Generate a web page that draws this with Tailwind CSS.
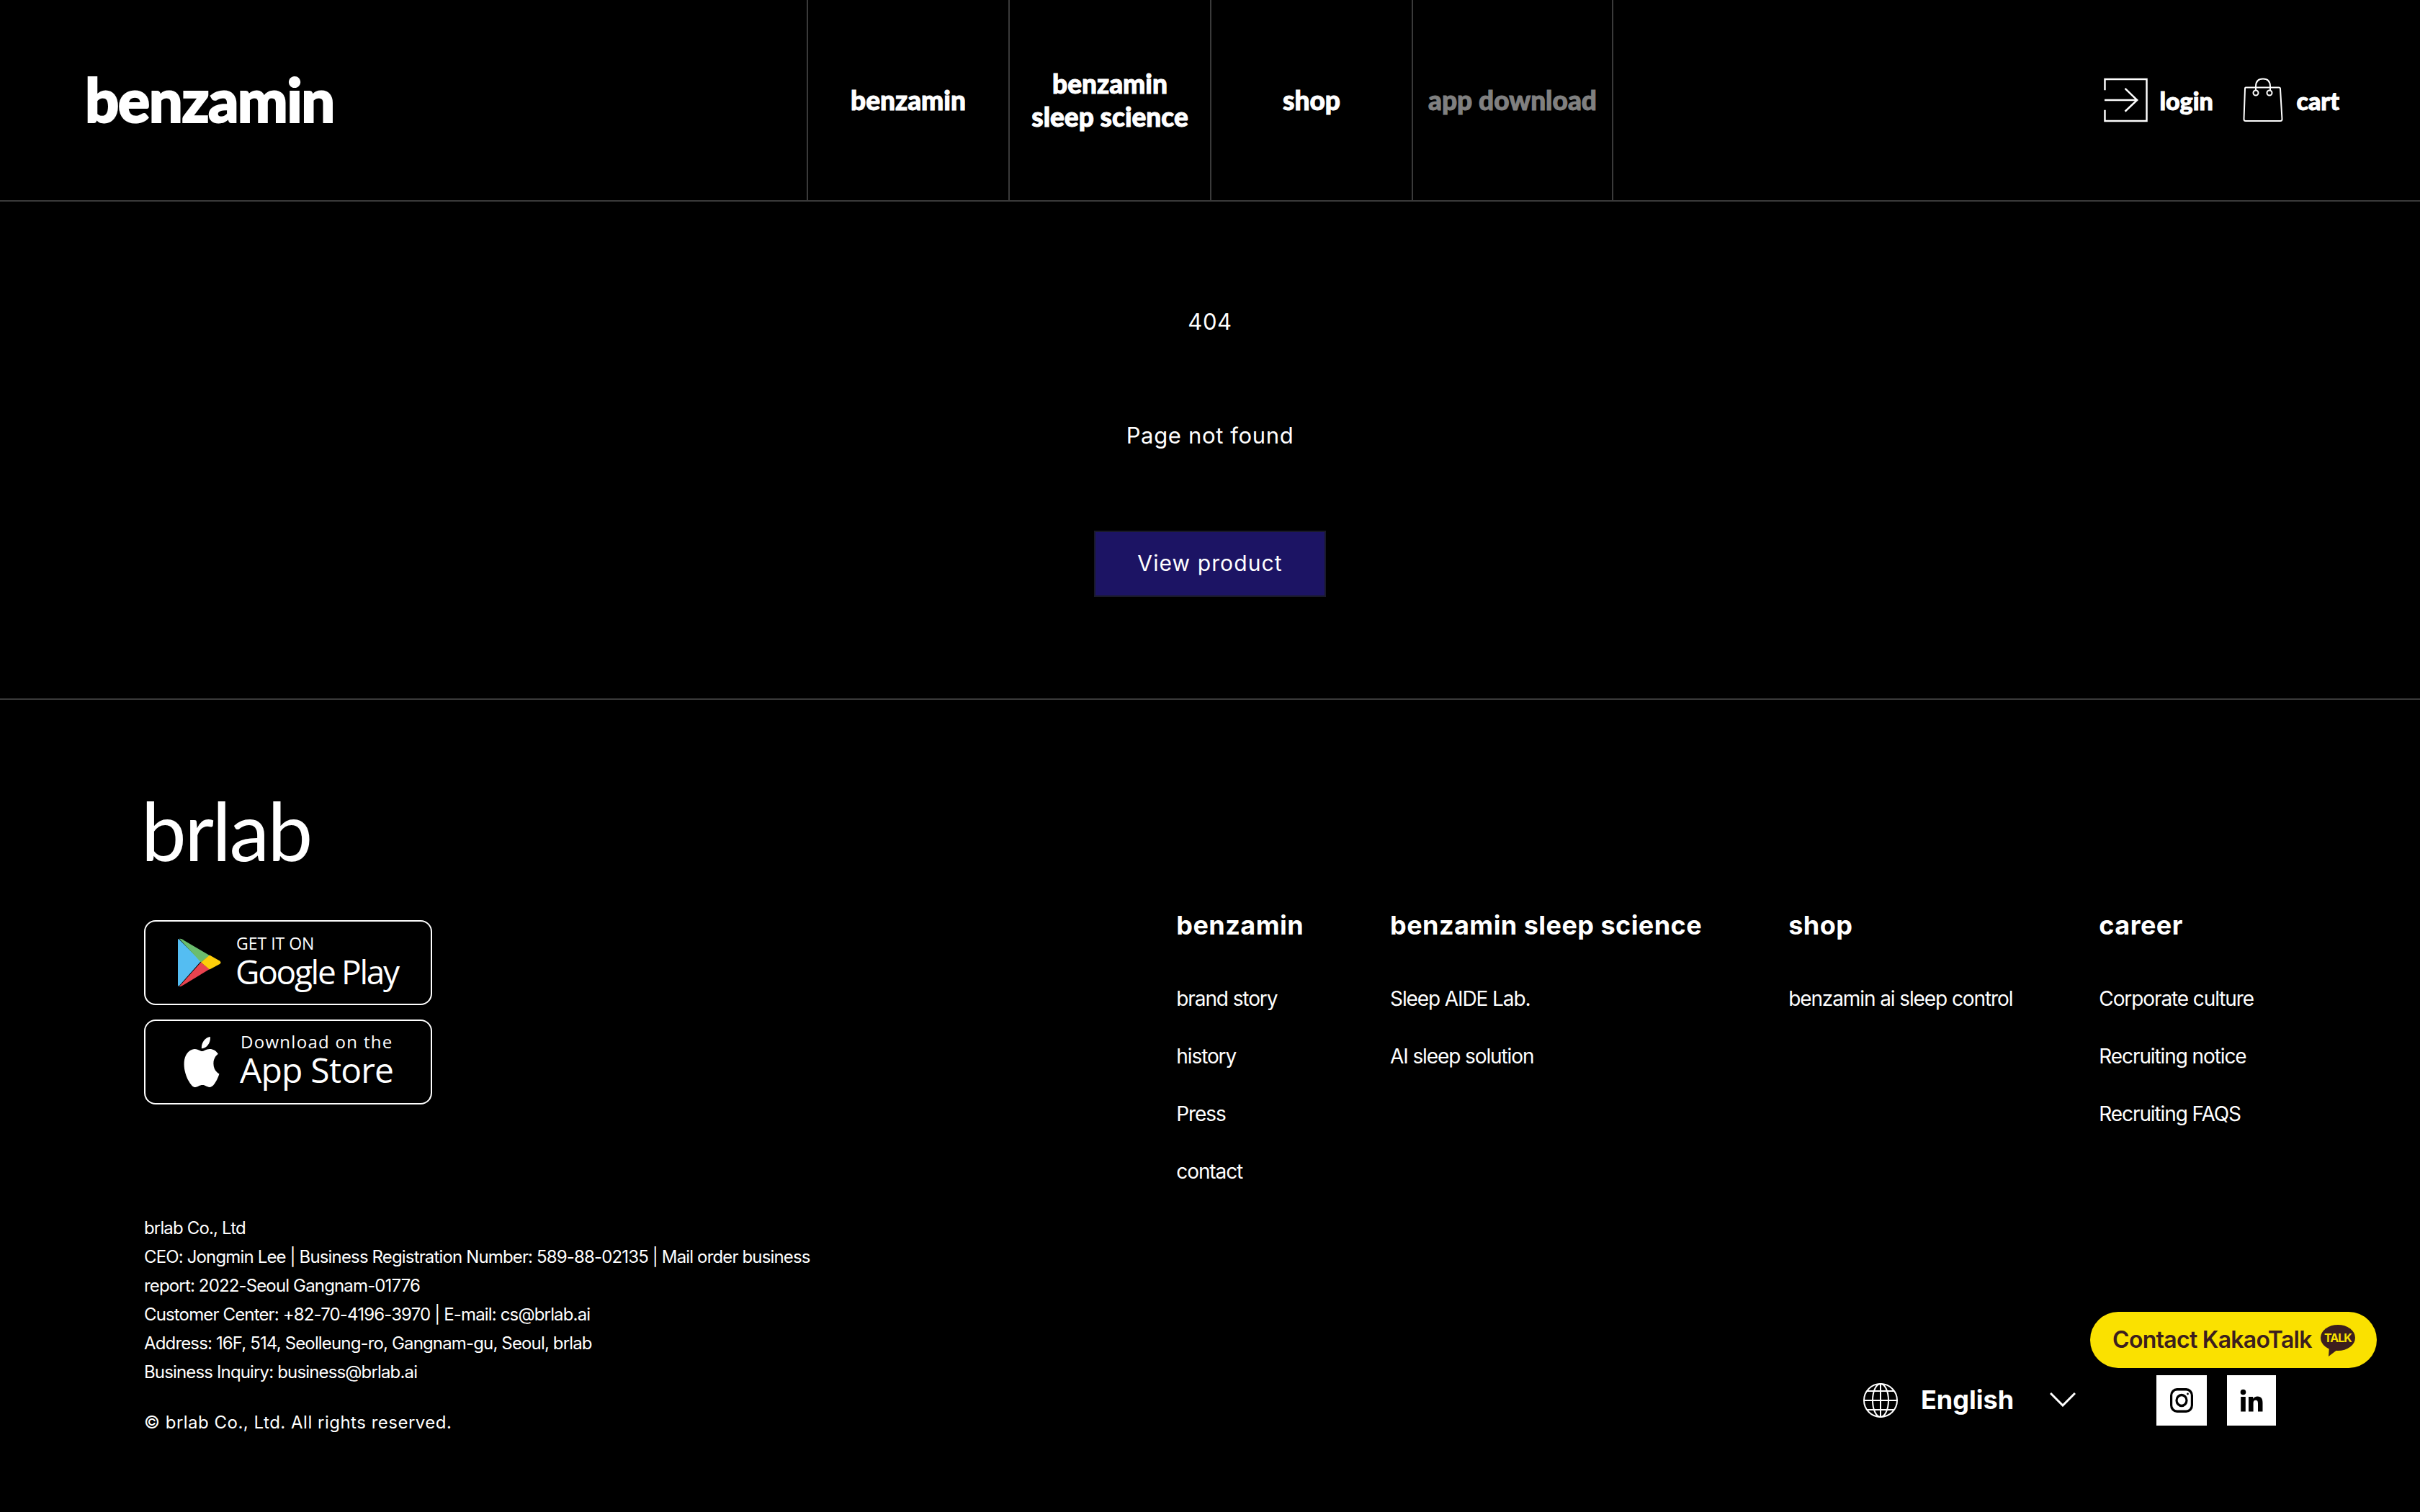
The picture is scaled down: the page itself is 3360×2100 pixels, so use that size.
<!DOCTYPE html>
<html lang="en">
<head>
<meta charset="utf-8">
<title>benzamin - 404</title>
<script src="https://cdn.jsdelivr.net/npm/@tailwindcss/browser@4"></script>
</head>
<body class="bg-black text-white font-['Inter',sans-serif]">
<div class="relative w-[3360px] h-[2100px] overflow-hidden bg-black flex flex-col">
  <header class="h-[280px] shrink-0 border-b-2 border-[#3a3a3a] flex items-stretch justify-between pl-[118px] pr-[112px]">
    <div class="w-[1000px] flex items-center font-['Lato',sans-serif] font-black text-[83px] tracking-[-1.6px] leading-none pb-[2px] [-webkit-text-stroke-width:2px]">benzamin</div>
    <nav class="absolute left-[1120px] top-0 h-[278px] flex border-l-2 border-[#3a3a3a] font-['Lato',sans-serif] font-black text-[37px] leading-[46px] text-center [-webkit-text-stroke-width:1px]">
      <a class="w-[280px] border-r-2 border-[#3a3a3a] flex items-center justify-center">benzamin</a>
      <a class="w-[280px] border-r-2 border-[#3a3a3a] flex items-center justify-center">benzamin<br>sleep science</a>
      <a class="w-[280px] border-r-2 border-[#3a3a3a] flex items-center justify-center">shop</a>
      <a class="w-[278px] border-r-2 border-[#3a3a3a] flex items-center justify-center text-[#808080] whitespace-nowrap">app download</a>
    </nav>
    <div class="flex items-center font-['Lato',sans-serif] font-black text-[34px] [-webkit-text-stroke-width:1px]">
      <svg class="w-[61px] h-[62px]" viewBox="0 0 62 62" fill="none" stroke="white" stroke-width="2.5"><path d="M1.5 17V1.5H60.5V60.5H1.5V45"/><path d="M1 31H47M30 14.5L47 31L30 47"/></svg>
      <span class="ml-[16px] w-[74px]">login</span>
      <svg class="ml-[42px] w-[56px] h-[62px]" viewBox="0 0 56 62" fill="none" stroke="white" stroke-width="2"><path d="M4 13.5H50Q52 13.5 52 15.5L54.5 57.5Q54.5 60 52 60H4Q1.5 60 1.5 57.5L3 15.5Q3 13.5 4 13.5Z"/><path d="M18 17V12C18 5 22 1.5 28 1.5S38 5 38 12V17"/><circle cx="18" cy="21" r="3.5"/><circle cx="37" cy="21" r="3.5"/></svg>
      <span class="ml-[18px]">cart</span>
    </div>
  </header>

  <main class="h-[690px] shrink-0 flex flex-col items-center">
    <p class="mt-[147px] h-[40px] leading-[40px] text-[31px] tracking-[0.65px]">404</p>
    <p class="mt-[118px] h-[40px] leading-[40px] text-[31px] tracking-[0.65px]">Page not found</p>
    <a class="mt-[112px] w-[322px] h-[92px] flex items-center justify-center bg-[#1c1464] border-2 border-[#1a1a2a] text-[30px] tracking-[1.1px] pb-[2px]">View product</a>
  </main>

  <footer class="flex-1 border-t-2 border-[#3a3a3a] flex justify-between pl-[200px] pr-[200px]">
    <div class="w-[940px] flex flex-col">
      <div class="mt-[126px] h-[110px] flex items-center font-['Lato',sans-serif] font-normal text-[112px] leading-none tracking-[-2.5px] -ml-[4px]">brlab</div>
      <div class="mt-[70px] w-[400px] h-[118px] border-2 border-white rounded-[16px] flex items-center">
        <svg class="ml-[44px] w-[62px] h-[68px]" viewBox="0 0 62 68">
          <path d="M1 2Q1 1 2 1L33 32L2 67Q1 66 1 65Z" fill="#54bdf2"/>
          <path d="M3 0.8Q5 0.3 7 1.6L45 24L33 33.5Z" fill="#6bbd6e"/>
          <path d="M33 33.5L45 43L7 66Q5 67.5 3 67Z" fill="#e9434f"/>
          <path d="M45 23.5L59 31.5Q62 33.8 59 36L45 43.5L33 33.5Z" fill="#fdce0a"/>
        </svg>
        <div class="ml-[20px] -mt-[2px] flex flex-col font-['Open_Sans',sans-serif]">
          <span class="text-[23px] leading-[26px]">GET IT ON</span>
          <span class="text-[46px] leading-[52px] tracking-[-2.3px] -ml-[1px] font-medium">Google Play</span>
        </div>
      </div>
      <div class="mt-[20px] w-[400px] h-[118px] border-2 border-white rounded-[16px] flex items-center">
        <svg class="ml-[48px] w-[60px] h-[70px]" viewBox="0 0 24 24" preserveAspectRatio="none" fill="white"><path d="M12.152 6.896c-.948 0-2.415-1.078-3.96-1.04-2.04.027-3.91 1.183-4.961 3.014-2.117 3.675-.546 9.103 1.519 12.09 1.013 1.454 2.208 3.09 3.792 3.039 1.52-.065 2.09-.987 3.935-.987 1.831 0 2.35.987 3.96.948 1.637-.026 2.676-1.48 3.676-2.948 1.156-1.688 1.636-3.325 1.662-3.415-.039-.013-3.182-1.221-3.22-4.857-.026-3.04 2.48-4.494 2.597-4.559-1.429-2.09-3.623-2.324-4.39-2.376-2-.156-3.675 1.09-4.61 1.09zM15.53 3.83c.843-1.012 1.4-2.427 1.245-3.83-1.207.052-2.662.805-3.532 1.818-.78.896-1.454 2.338-1.273 3.714 1.338.104 2.715-.688 3.559-1.701"/></svg>
        <div class="ml-[23px] -mt-[6px] flex flex-col font-['Open_Sans',sans-serif]">
          <span class="text-[24px] leading-[28px] tracking-[1.3px] ml-[1px]">Download on the</span>
          <span class="text-[48px] leading-[50px] tracking-[-0.8px] font-medium">App Store</span>
        </div>
      </div>
      <div class="mt-[152px] text-[24px] leading-[40px] tracking-[-0.85px]">
        <p>brlab Co., Ltd</p>
        <p>CEO: Jongmin Lee | Business Registration Number: 589-88-02135 | Mail order business report: 2022-Seoul Gangnam-01776</p>
        <p>Customer Center: +82-70-4196-3970 | E-mail: cs@brlab.ai</p>
        <p>Address: 16F, 514, Seolleung-ro, Gangnam-gu, Seoul, brlab</p>
        <p>Business Inquiry: business@brlab.ai</p>
      </div>
      <p class="mt-[30px] text-[24px] leading-[40px] tracking-[0.5px]">© brlab Co., Ltd. All rights reserved.</p>
    </div>

    <div class="relative flex-1 flex flex-col items-end">
      <div class="mt-[291px] mr-[31px] flex gap-[120px]">
        <div class="flex flex-col">
          <h3 class="text-[36px] font-bold leading-[44px] h-[44px] mb-[60px] tracking-[0.45px]">benzamin</h3>
          <ul class="flex flex-col gap-[40px] text-[28px] leading-[40px] tracking-[-1.1px]"><li>brand story</li><li>history</li><li>Press</li><li>contact</li></ul>
        </div>
        <div class="flex flex-col">
          <h3 class="text-[36px] font-bold leading-[44px] h-[44px] mb-[60px] tracking-[0.45px]">benzamin sleep science</h3>
          <ul class="flex flex-col gap-[40px] text-[28px] leading-[40px] tracking-[-1.1px]"><li>Sleep AIDE Lab.</li><li>AI sleep solution</li></ul>
        </div>
        <div class="flex flex-col">
          <h3 class="text-[36px] font-bold leading-[44px] h-[44px] mb-[60px] tracking-[0.45px]">shop</h3>
          <ul class="flex flex-col gap-[40px] text-[28px] leading-[40px] tracking-[-1.1px]"><li>benzamin ai sleep control</li></ul>
        </div>
        <div class="flex flex-col">
          <h3 class="text-[36px] font-bold leading-[44px] h-[44px] mb-[60px] tracking-[0.45px]">career</h3>
          <ul class="flex flex-col gap-[40px] text-[28px] leading-[40px] tracking-[-1.1px]"><li>Corporate culture</li><li>Recruiting notice</li><li>Recruiting FAQS</li></ul>
        </div>
      </div>
      <div class="mt-auto mb-[120px] flex items-center h-[70px]">
        <svg class="w-[48px] h-[48px]" viewBox="0 0 48 48" fill="none" stroke="white" stroke-width="2"><circle cx="24" cy="24" r="23"/><ellipse cx="24" cy="24" rx="11" ry="23"/><path d="M24 1V47M1 24H47M5 11H43M5 37H43"/></svg>
        <span class="ml-[32px] w-[127px] text-[36px] font-bold -mt-[2px]">English</span>
        <svg class="ml-[52px] w-[36px] h-[20px] -mt-[2px]" viewBox="0 0 36 20" fill="none" stroke="white" stroke-width="3"><path d="M1 1L18 18L35 1"/></svg>
        <a class="ml-[112px] w-[70px] h-[70px] bg-white flex items-center justify-center">
          <svg class="w-[32px] h-[34px]" viewBox="0 0 32 32" preserveAspectRatio="none" fill="none" stroke="black" stroke-width="3.2"><rect x="1.6" y="1.6" width="28.8" height="28.8" rx="8"/><circle cx="16" cy="16" r="7"/><circle cx="24.5" cy="7.5" r="1.4" fill="black" stroke="none"/></svg>
        </a>
        <a class="ml-[28px] w-[68px] h-[70px] bg-white flex items-center justify-center">
          <svg class="w-[32px] h-[32px]" viewBox="0 0 32 32" fill="black"><circle cx="4.5" cy="4.5" r="3.8"/><rect x="1.2" y="11" width="6.6" height="20.5"/><path d="M12 11H18.2V13.8C19.2 12 21.4 10.5 24.4 10.5C30 10.5 31.5 14 31.5 19.2V31.5H25V20.5C25 18 24.6 15.8 21.9 15.8C19.2 15.8 18.6 17.8 18.6 20.4V31.5H12Z"/></svg>
        </a>
      </div>
    </div>
  </footer>

  <a class="absolute left-[2902px] top-[1822px] w-[398px] h-[78px] rounded-full bg-[#fae100] text-[#3c1e1e] flex items-center pl-[31px]">
    <span class="text-[32px] font-semibold tracking-[-0.7px] whitespace-nowrap">Contact KakaoTalk</span>
    <span class="absolute left-[320px] top-[18px] w-[48px] h-[44px]">
      <svg class="absolute inset-0 w-[48px] h-[44px]" viewBox="0 0 48 44" fill="#3c1e1e"><ellipse cx="24" cy="18" rx="24" ry="18"/><path d="M12 30L11 44L24 34Z"/></svg>
      <span class="absolute left-0 top-[6px] w-[48px] text-center text-[#fae100] text-[16px] leading-[24px] font-bold tracking-[-1px]">TALK</span>
    </span>
  </a>
</div>
</body>
</html>
